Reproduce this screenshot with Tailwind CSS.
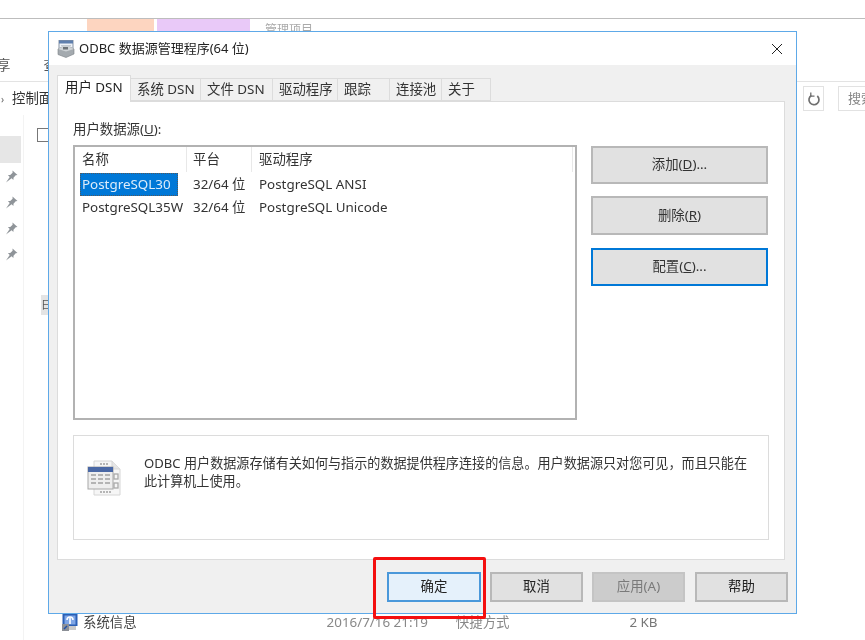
<!DOCTYPE html>
<html lang="zh">
<head>
<meta charset="utf-8">
<script src="https://cdn.jsdelivr.net/npm/@tailwindcss/browser@4"></script>
</head>
<body class="m-0 bg-white">
<div class="relative w-[865px] h-[640px] overflow-hidden bg-white text-[13.4px] text-[#333] font-['Noto_Sans','Noto_Sans_CJK_SC',sans-serif] blur-[0.5px]">

  <!-- Explorer window behind -->
  <div class="flex flex-col h-full">
    <div class="h-[19px] border-b-[1px] border-[#bdbdbd] shrink-0"></div>
    <div class="h-[12px] flex shrink-0">
      <div class="ml-[87px] w-[67px] bg-[#fdd5c0]"></div>
      <div class="ml-[3px] w-[93px] bg-[#e9c9f8]"></div>
      <div class="ml-[15px] text-[#aaa] text-[12px] leading-[22px]">管理项目</div>
    </div>
    <div class="h-[50px] shrink-0 text-[#555] leading-[18px] pt-[25px] flex">
      <span class="-ml-[3px]">享</span><span class="ml-[33px]">查</span>
    </div>
    <div class="h-[34px] border-t border-[#e3e3e3] shrink-0 flex justify-between">
      <div class="flex items-center pl-[1px] text-[#333] leading-none pt-[1px]">
        <span class="text-[#666] text-[10px] w-[11px]">›</span><span>控制面板</span>
      </div>
      <div class="flex pt-[4px] h-[30px]">
        <div class="w-[21px] h-[25px] border border-[#e2e2e2] flex items-center justify-center">
          <svg width="14" height="16" viewBox="0 0 14 16" fill="none" stroke="#6f6f6f" stroke-width="1.700"><path d="M10.300 5A5 5 0 1 1 4.300 4.500"/><path d="M3.800 1.500V5.200H7.500" stroke-width="1.300"/></svg>
        </div>
        <div class="ml-[14px] w-[27px] h-[25px] border border-[#e2e2e2] border-r-0 text-[13px] text-[#888] leading-[23px] pl-[9px] overflow-hidden whitespace-nowrap">搜索</div>
      </div>
    </div>
    <div class="flex-1 flex min-h-0">
      <div class="w-[24px] border-r border-[#f3f3f3] shrink-0 pt-[21px] flex flex-col">
        <div class="w-[21px] h-[27px] bg-[#e6e6e6] shrink-0"></div>
        <div class="flex flex-col gap-[13px] pl-[5px] pt-[7px]">
          <svg class="block" width="13" height="13" viewBox="0 0 13 13" fill="#8f9499"><path d="M7.500 0.500l5 4.500-1.800.3-2.200 2.400-.1 2.300-1.800-1.800L1 12.500l3.700-5.600-1.800-1.800 2.300-.1 2.400-2.200z"/></svg>
          <svg class="block" width="13" height="13" viewBox="0 0 13 13" fill="#8f9499"><path d="M7.500 0.500l5 4.500-1.800.3-2.200 2.400-.1 2.300-1.800-1.800L1 12.500l3.700-5.600-1.800-1.800 2.300-.1 2.400-2.200z"/></svg>
          <svg class="block" width="13" height="13" viewBox="0 0 13 13" fill="#8f9499"><path d="M7.500 0.500l5 4.500-1.800.3-2.200 2.400-.1 2.300-1.800-1.800L1 12.500l3.700-5.600-1.800-1.800 2.300-.1 2.400-2.200z"/></svg>
          <svg class="block" width="13" height="13" viewBox="0 0 13 13" fill="#8f9499"><path d="M7.500 0.500l5 4.500-1.800.3-2.200 2.400-.1 2.300-1.800-1.800L1 12.500l3.700-5.600-1.800-1.800 2.300-.1 2.400-2.200z"/></svg>
        </div>
      </div>
      <div class="flex-1 pl-[13px] pt-[13px]">
        <div class="w-[14px] h-[14px] border border-[#777]"></div>
        <div class="mt-[153px] ml-[4px] w-[14px] h-[20px] bg-[#e4e4e4] text-[11px] leading-[20px] text-[#555]">日</div>
        <div class="mt-[298px] ml-[25px] flex items-center h-[18px] whitespace-nowrap">
          <svg width="16" height="17" viewBox="0 0 16 17" class="shrink-0"><rect x="0.500" y="0" width="15" height="12" fill="#2b5fb5"/><rect x="2.500" y="1.500" width="11" height="9" fill="#7fa6e6"/><path d="M5 6a3 3 0 0 1 6 0" stroke="#fff" stroke-width="1.500" fill="none"/><path d="M8 4v6" stroke="#fff" stroke-width="1.600"/><path d="M4 12h10v4H4z" fill="#c9c9c9"/><rect x="0" y="10" width="7" height="7" fill="#8b8f96"/><path d="M2 15l3-3" stroke="#1d4fa8" stroke-width="1.500"/></svg>
          <span class="ml-[5px] text-[#444]">系统信息</span>
          <span class="ml-[190px] text-[#888]">2016/7/16 21:19</span>
          <span class="ml-[28px] text-[#888]">快捷方式</span>
          <span class="ml-[120px] text-[#777]">2 KB</span>
        </div>
      </div>
    </div>
  </div>

  <!-- ODBC dialog -->
  <div class="absolute left-[48px] top-[31px] w-[749px] h-[583px] border border-[#5ea9e8] flex flex-col bg-[#f0f0f0]">
    <div class="h-[33px] bg-white flex items-center shrink-0 pl-[8px] pr-[13px]">
      <svg width="18" height="18" viewBox="0 0 18 18">
        <rect x="2" y="0.500" width="14" height="11" fill="#eef2f7" stroke="#8793a3"/>
        <rect x="2" y="0.500" width="14" height="3" fill="#5f7fae"/>
        <path d="M4 5.500h10M4 7.500h10" stroke="#c2c9d2"/>
        <path d="M1 9l4-2h8l4 2v5l-8 3.500L1 14.500z" fill="#a4aaaf" stroke="#7a7f84" stroke-width="0.600"/>
        <path d="M1 9l8 2.500L17 9 13 7H5z" fill="#cfd3d6"/>
        <rect x="6" y="7" width="5" height="2.500" fill="#6d7378"/>
      </svg>
      <span class="ml-[4px] text-[#222] text-[13px] leading-none">ODBC 数据源管理程序(64 位)</span>
      <svg class="ml-auto" width="12" height="12" viewBox="0 0 12 12" stroke="#222" stroke-width="1" fill="none"><path d="M1 1l10 10M11 1L1 11"/></svg>
    </div>
    <div class="flex-1 flex flex-col pl-[8px] pr-[8px] pt-[10px] min-h-0">
      <!-- Tabs -->
      <div class="flex items-end h-[26px] shrink-0 relative z-10 text-[#333] leading-none whitespace-nowrap">
        <div class="w-[74px] h-[27px] -mb-[1px] bg-white border border-b-0 border-[#dcdcdc] pl-[7px] pt-[5px] text-[#222]">用户 DSN</div>
        <div class="w-[70px] h-[23px] bg-[#f0f0f0] border border-[#dcdcdc] border-l-0 pl-[6px] flex items-center">系统 DSN</div>
        <div class="w-[72px] h-[23px] bg-[#f0f0f0] border border-[#dcdcdc] border-l-0 pl-[6px] flex items-center">文件 DSN</div>
        <div class="w-[65px] h-[23px] bg-[#f0f0f0] border border-[#dcdcdc] border-l-0 pl-[6px] flex items-center">驱动程序</div>
        <div class="w-[52px] h-[23px] bg-[#f0f0f0] border border-[#dcdcdc] border-l-0 pl-[6px] flex items-center">跟踪</div>
        <div class="w-[52px] h-[23px] bg-[#f0f0f0] border border-[#dcdcdc] border-l-0 pl-[6px] flex items-center">连接池</div>
        <div class="w-[49px] h-[23px] bg-[#f0f0f0] border border-[#dcdcdc] border-l-0 pl-[6px] flex items-center">关于</div>
      </div>
      <!-- Panel -->
      <div class="h-[459px] mr-[3px] shrink-0 bg-white border border-[#dcdcdc] pl-[15px] pr-[15px] pt-[19px] flex flex-col">
        <div class="text-[#333] leading-[16px] h-[16px] mb-[8px]">用户数据源(<span class="underline">U</span>):</div>
        <div class="flex h-[275px] shrink-0">
          <div class="w-[504px] border-2 border-[#b2b2b2] shrink-0 leading-none whitespace-nowrap">
            <div class="grid grid-cols-[112px_65px_1fr] h-[25px] items-stretch text-[#333]">
              <div class="border-r border-[#e8e8e8] pl-[7px] flex items-center">名称</div>
              <div class="border-r border-[#e8e8e8] pl-[6px] flex items-center">平台</div>
              <div class="pl-[7px] flex items-center border-r border-[#e8e8e8] mr-[2px]">驱动程序</div>
            </div>
            <div class="grid grid-cols-[112px_65px_1fr] h-[23px] items-center mt-[1px]">
              <div class="pl-[5px]"><span class="inline-flex items-center h-[23px] bg-[#0078d7] text-[#dcecfa] px-[1px] w-[98px] border border-dotted border-[#54585c]">PostgreSQL30</span></div>
              <div class="pl-[6px]">32/64 位</div>
              <div class="pl-[7px]">PostgreSQL ANSI</div>
            </div>
            <div class="grid grid-cols-[112px_65px_1fr] h-[23px] items-center">
              <div class="pl-[7px]">PostgreSQL35W</div>
              <div class="pl-[6px]">32/64 位</div>
              <div class="pl-[7px]">PostgreSQL Unicode</div>
            </div>
          </div>
          <div class="ml-[14px] w-[177px] flex flex-col text-[#333] leading-none">
            <div class="mt-[1px] h-[38px] bg-[#e1e1e1] border-2 border-[#b8b8b8] flex items-center justify-center">添加(<span class="underline">D</span>)...</div>
            <div class="mt-[12px] h-[39px] bg-[#e1e1e1] border-2 border-[#b8b8b8] flex items-center justify-center">删除(<span class="underline">R</span>)</div>
            <div class="mt-[13px] h-[38px] bg-[#e1e1e1] border-2 border-[#0078d7] flex items-center justify-center">配置(<span class="underline">C</span>)...</div>
          </div>
        </div>
        <div class="mt-[15px] h-[105px] w-[696px] border border-[#dcdcdc] flex pl-[13px] pt-[24px] shrink-0">
          <svg width="36" height="36" viewBox="0 0 36 36" class="shrink-0">
            <path d="M7 1h18l8 8v26H7z" fill="#f6f6f6" stroke="#d6d6d6"/>
            <path d="M25 1v8h8" fill="#e6e6e6" stroke="#d6d6d6"/>
            <path d="M13 4h9M13 32h12" stroke="#b5b5b5" stroke-width="2" stroke-dasharray="2 1"/>
            <rect x="27" y="14" width="4" height="5" fill="none" stroke="#aaa" stroke-width="1.300"/>
            <rect x="27" y="23" width="4" height="5" fill="none" stroke="#aaa" stroke-width="1.300"/>
            <rect x="1" y="7" width="25" height="22" fill="#eeeeee" stroke="#a8a8a8"/>
            <rect x="1" y="7" width="25" height="5" fill="#4a68a5"/>
            <path d="M4 15h5M11 15h5M18 15h5M4 19h5M11 19h5M18 19h5M4 23h5M11 23h5M18 23h5" stroke="#b4b4b4" stroke-width="2"/>
          </svg>
          <div class="ml-[21px] w-[606px] text-[#333] text-[13.1px] leading-[18px] -mt-[6px]">ODBC 用户数据源存储有关如何与指示的数据提供程序连接的信息。用户数据源只对您可见，而且只能在此计算机上使用。</div>
        </div>
      </div>
      <!-- Footer buttons -->
      <div class="flex justify-end gap-[9px] pt-[12px] text-[#222] leading-none">
        <div class="w-[94px] h-[30px] pb-[1px] bg-[#e5f1fb] border-2 border-[#4a98da] flex items-center justify-center">确定</div>
        <div class="w-[93px] h-[30px] pb-[1px] bg-[#e1e1e1] border-2 border-[#b8b8b8] flex items-center justify-center">取消</div>
        <div class="w-[93px] h-[30px] pb-[1px] bg-[#cccccc] border-2 border-[#c4c4c4] text-[#7a7a7a] flex items-center justify-center">应用(A)</div>
        <div class="ml-[1px] w-[93px] h-[30px] pb-[1px] bg-[#e1e1e1] border-2 border-[#b8b8b8] flex items-center justify-center">帮助</div>
      </div>
    </div>
  </div>

  <!-- Red annotation -->
  <div class="absolute left-[373px] top-[557px] w-[113px] h-[62px] border-[3px] border-[#f40f0f] rounded-[2px]"></div>
</div>
</body>
</html>
